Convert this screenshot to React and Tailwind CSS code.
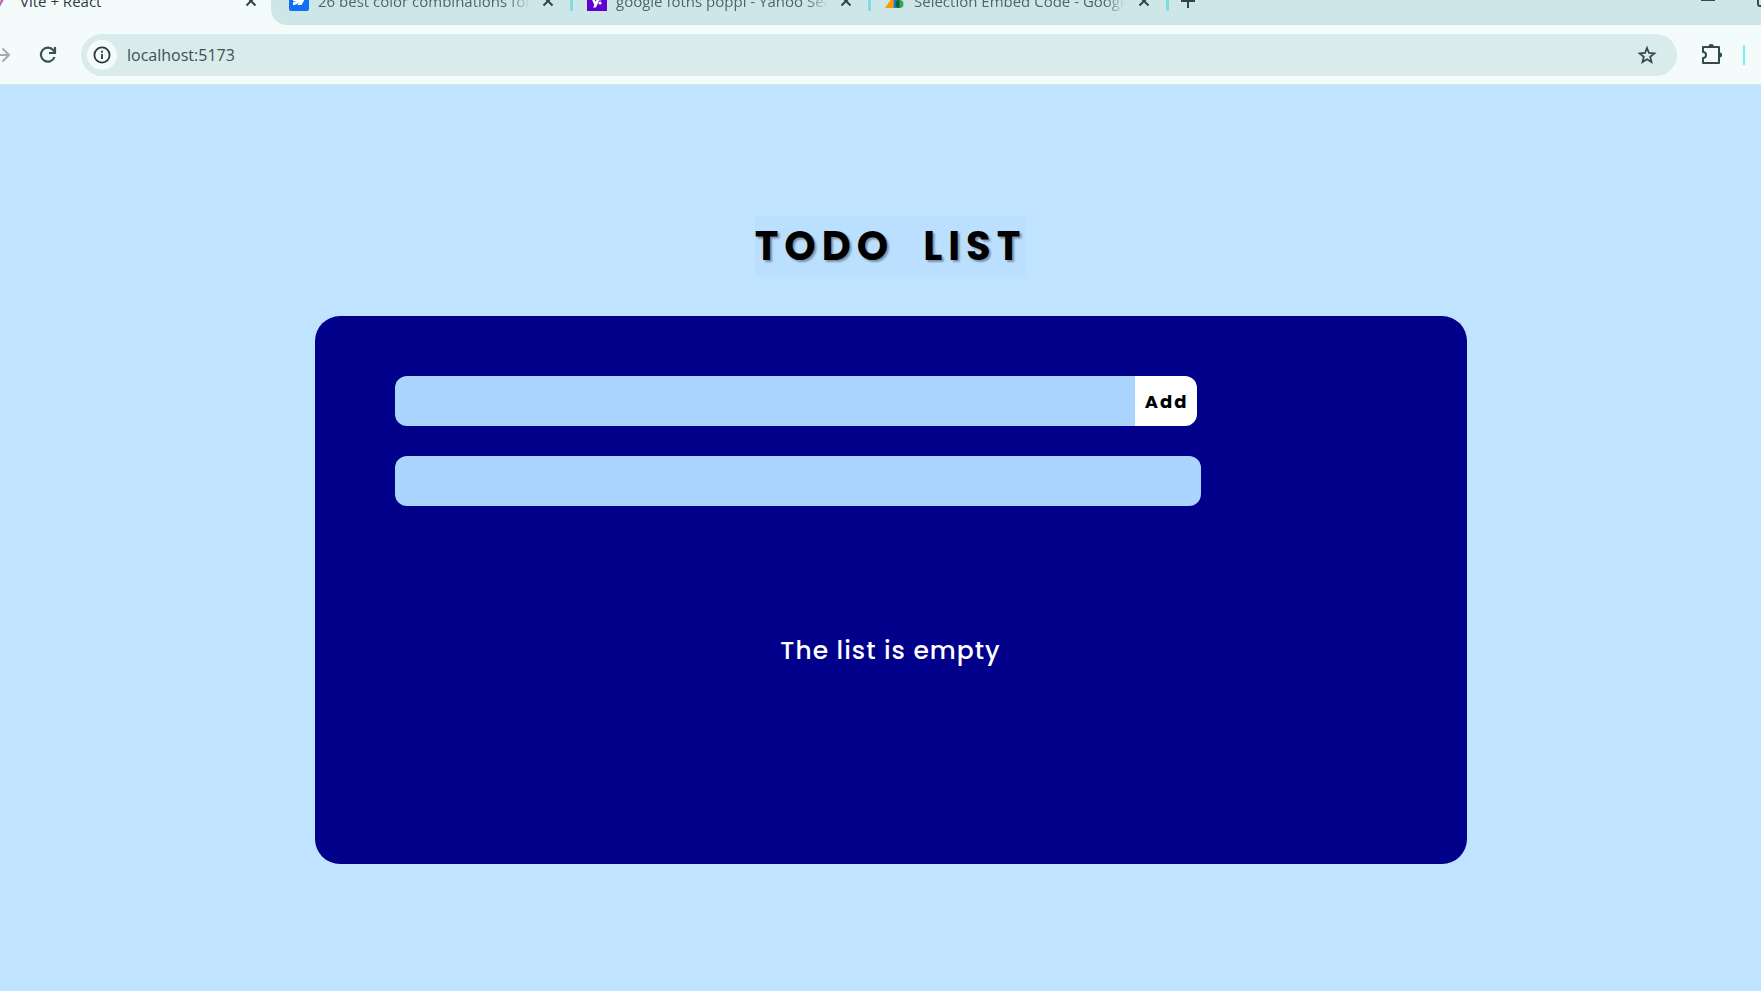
import React, { useState } from "react";

function Close() {
  return (
    <svg width="12" height="12" viewBox="0 0 12 12" stroke="#2f4446" strokeWidth="2" aria-hidden="true">
      <path d="M1.5 1.5l9 9M10.5 1.5l-9 9" />
    </svg>
  );
}

function ViteIcon() {
  return (
    <svg width="20" height="20" viewBox="0 0 20 20" aria-hidden="true">
      <path d="M1 3l9 16L19 3l-8 1.500z" fill="#a855f7" />
      <path d="M17 2L8 1.500l-.5 8.500 2.500-.5-.5 7 4-7z" fill="#ffb01a" />
    </svg>
  );
}

function ArrowIcon() {
  return (
    <svg width="20" height="20" viewBox="0 0 20 20" aria-hidden="true">
      <rect width="20" height="20" rx="2" fill="#146ef5" />
      <path d="M17 6l-4.500 8H8.500l1.500-3c-1.500 1.800-3.400 3-6 3.200v-3.200s1.700-.1 2.700-1.100H4V6h3.200v2.700L8.500 6H11v2.700L12.300 6z" fill="#fff" />
    </svg>
  );
}

function YahooIcon() {
  return (
    <svg width="20" height="20" viewBox="0 0 20 20" aria-hidden="true">
      <rect width="20" height="20" fill="#6001d2" />
      <path d="M4 6.500h3l1.700 4.300 1.700-4.300h2.900L9 16.500H6.100l1.200-2.700z" fill="#fff" />
      <circle cx="13" cy="12" r="1.600" fill="#fff" />
      <path d="M13.500 3h3.200L14 9.500h-3.100z" fill="#fff" />
    </svg>
  );
}

function FontsIcon() {
  return (
    <svg width="20" height="20" viewBox="0 0 20 20" aria-hidden="true">
      <path d="M10.500 2L0 17h8l4-6z" fill="#fb9a00" />
      <path d="M9 3h5v14H8.500z" fill="#1a73e8" />
      <circle cx="14.500" cy="13" r="4" fill="#34a853" />
      <path d="M14.500 9a4 4 0 000 8z" fill="#0d652d" />
      <circle cx="13.500" cy="5" r="3" fill="#34a853" />
    </svg>
  );
}

const tabs = [
  { title: "26 best color combinations for your", Icon: ArrowIcon },
  { title: "google fotns poppi - Yahoo Search", Icon: YahooIcon },
  { title: "Selection Embed Code - Google Fonts", Icon: FontsIcon },
];

function TabStrip() {
  return (
    <div className="flex h-[25px] items-start overflow-hidden bg-[#f4fbfb]">
      <div className="-mt-[9px] flex h-5 w-[271px] shrink-0 items-center pr-[14px]">
        <span className="-ml-3 shrink-0"><ViteIcon /></span>
        <span className="ml-3 flex-1 text-[15px] leading-5 text-[#2b3b3d]">Vite + React</span>
        <button type="button" aria-label="Close Vite + React"><Close /></button>
      </div>
      <div className="flex h-[25px] min-w-0 flex-1 items-start rounded-bl-2xl bg-[#cde7e8]">
        {tabs.map(({ title, Icon }) => (
          <div key={title} className="-mt-[9px] flex h-5 w-[298px] shrink-0 items-center pl-[18px]">
            <Icon />
            <span className="ml-[9px] w-[212px] overflow-hidden bg-linear-to-r from-[#4a6264] from-90% to-transparent bg-clip-text text-[15px] leading-5 whitespace-nowrap text-transparent">
              {title}
            </span>
            <button type="button" aria-label={`Close ${title}`} className="ml-auto"><Close /></button>
            <span className="-mr-1 ml-4 h-5 w-[3px] rounded-sm bg-[#7ddde0]" />
          </div>
        ))}
        <button type="button" aria-label="New tab" className="-mt-1.5 ml-4">
          <svg width="14" height="14" viewBox="0 0 14 14" stroke="#2f4446" strokeWidth="2" aria-hidden="true">
            <path d="M7 0v14M0 7h14" />
          </svg>
        </button>
        <div className="-mt-3 ml-auto flex items-start gap-[42px]">
          <button type="button" aria-label="Minimize">
            <svg width="14" height="14" viewBox="0 0 14 14" stroke="#3b4b4d" strokeWidth="2" aria-hidden="true">
              <path d="M0 12h14" />
            </svg>
          </button>
          <button type="button" aria-label="Maximize" className="w-1 overflow-hidden">
            <svg width="18" height="19" viewBox="0 0 18 19" fill="none" stroke="#3b4b4d" strokeWidth="2" aria-hidden="true">
              <rect x="1" y="1" width="16" height="17" rx="2" />
            </svg>
          </button>
        </div>
      </div>
    </div>
  );
}

function Toolbar() {
  return (
    <div className="flex h-[60px] items-center border-b border-[#d5e6ec] bg-[#f4fbfb]">
      <button type="button" aria-label="Forward" className="-ml-2">
        <svg width="19" height="18" viewBox="0 0 19 18" fill="none" stroke="#a3acad" strokeWidth="2" aria-hidden="true">
          <path d="M0 9h17M10.500 2.500L17 9l-6.500 6.500" />
        </svg>
      </button>
      <button type="button" aria-label="Reload" className="ml-[28px]">
        <svg width="18" height="18" viewBox="0 0 18 18" fill="none" stroke="#3a5153" strokeWidth="2.200" aria-hidden="true">
          <path d="M15.500 11A7 7 0 1 1 14.300 4.200L16 6" />
          <path d="M16 1v6h-6" />
        </svg>
      </button>
      <div className="ml-6 flex h-[42px] min-w-0 flex-1 items-center rounded-full bg-[#daebeb] pr-5 pl-1.5">
        <button type="button" aria-label="View site information" className="flex size-[30px] shrink-0 items-center justify-center rounded-full bg-[#f4fbfb]">
          <svg width="18" height="18" viewBox="0 0 18 18" fill="none" stroke="#2c3738" strokeWidth="1.800" aria-hidden="true">
            <circle cx="9" cy="9" r="7.600" />
            <path d="M9 8v5M9 4.800v1.900" />
          </svg>
        </button>
        <input
          type="text"
          aria-label="Address"
          defaultValue="localhost:5173"
          className="ml-2.5 min-w-0 flex-1 bg-transparent text-[16px] leading-6 text-[#3f5052] outline-none"
        />
        <button type="button" aria-label="Bookmark this tab">
          <svg width="20" height="20" viewBox="0 0 20 20" fill="none" stroke="#3c4748" strokeWidth="1.800" aria-hidden="true">
            <path d="M10 3l2 5 5.300.4-4.100 3.400 1.300 5.200-4.500-2.800L5.500 17l1.300-5.200-4.100-3.400L8 8z" />
          </svg>
        </button>
      </div>
      <button type="button" aria-label="Extensions" className="ml-6">
        <svg width="22" height="22" viewBox="0 0 22 22" fill="none" stroke="#33494b" strokeWidth="2" strokeLinejoin="round" aria-hidden="true">
          <path d="M2 3h16v16H2v-5a3 3 0 0 0 0-6z" />
          <path d="M8 2.500a2.200 2.200 0 0 1 4.400 0zM18.500 8.800a2.200 2.200 0 0 1 0 4.400z" fill="#33494b" strokeWidth="1" />
        </svg>
      </button>
      <span className="mr-4 ml-5 h-5 w-0.5 bg-[#7df0f5]" />
    </div>
  );
}

export default function App() {
  const [text, setText] = useState("");
  const [query, setQuery] = useState("");
  return (
    <div className="flex min-h-screen flex-col bg-[#c0e4ff] font-['Open_Sans',sans-serif]">
      <header>
        <TabStrip />
        <Toolbar />
      </header>
      <main className="flex flex-1 flex-col items-center pt-[131px] pb-12 pl-5 font-['Poppins','Inter',sans-serif]">
        <h1 className="bg-[#bbdfff] text-[40px] leading-[60px] font-bold tracking-[6px] whitespace-pre text-black [text-shadow:2px_2px_2px_rgba(0,0,0,0.35)]">
          {"TODO  LIST"}
        </h1>
        <section className="mt-10 flex min-h-[548px] w-full max-w-6xl flex-col rounded-[25px] bg-[#00008b] px-20 pt-[60px]">
          <form className="flex h-[50px] max-w-[802px]" onSubmit={(e) => e.preventDefault()}>
            <input
              type="text"
              aria-label="New task"
              value={text}
              onChange={(e) => setText(e.target.value)}
              className="min-w-0 flex-1 rounded-l-xl bg-[#abd5ff] px-4 text-lg outline-none"
            />
            <button type="submit" className="w-[62px] rounded-r-xl bg-white pl-0.5 text-[18px] font-bold tracking-[2px] text-black">
              Add
            </button>
          </form>
          <input
            type="text"
            aria-label="Search tasks"
            value={query}
            onChange={(e) => setQuery(e.target.value)}
            className="mt-[30px] h-[50px] w-full max-w-[806px] rounded-xl bg-[#abd5ff] px-4 text-lg outline-none"
          />
          <p className="mt-[125px] text-center text-[25px] leading-10 font-medium tracking-[1px] text-white">The list is empty</p>
        </section>
      </main>
    </div>
  );
}
